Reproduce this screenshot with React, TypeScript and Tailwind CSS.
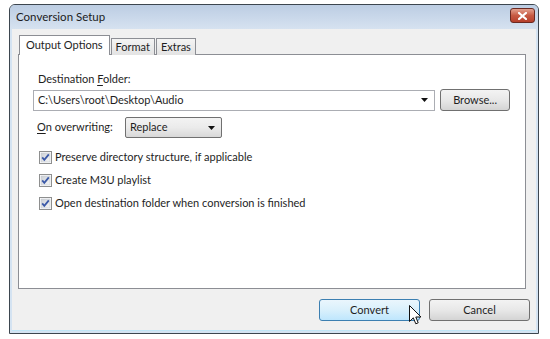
import React from "react";

function CheckBox() {
  return (
    <svg width="13" height="13" viewBox="0 0 13 13" className="shrink-0">
      <defs>
        <linearGradient id="cbg" x1="0" y1="0" x2="1" y2="1">
          <stop offset="0" stopColor="#cbcfd5" />
          <stop offset="1" stopColor="#f6f6f6" />
        </linearGradient>
      </defs>
      <rect x="0.5" y="0.5" width="12" height="12" fill="#fff" stroke="#8e8f8f" />
      <rect x="2" y="2" width="9" height="9" fill="url(#cbg)" stroke="#c2c8d0" strokeWidth="0.6" />
      <path d="M3.2 6.4 L5.3 8.8 L9.8 3.4" fill="none" stroke="#3b59a8" strokeWidth="1.8" />
    </svg>
  );
}

function Option({ label }: { label: string }) {
  return (
    <div className="flex items-center gap-[3px] h-[23px] pl-[6px]">
      <CheckBox />
      <span>{label}</span>
    </div>
  );
}

function Cursor() {
  return (
    <svg
      width="13"
      height="21"
      viewBox="0 0 13 21"
      className="absolute left-[409px] top-[305px]"
    >
      <path
        d="M0.5 0.5 L0.5 16.5 L4.3 12.8 L6.8 18.8 L9.2 17.8 L6.8 12 L12 12 Z"
        fill="#fff"
        stroke="#111"
        strokeWidth="1"
        strokeLinejoin="round"
      />
    </svg>
  );
}

export default function App() {
  return (
    <div
      className="relative w-[550px] h-[339px] bg-white pt-[4px] pl-[9px] text-[11px] text-[#1e1e1e] overflow-hidden"
      style={{ fontFamily: 'Lato, "Open Sans", sans-serif' }}
    >
      <div className="w-[530px] h-[330px] flex flex-col border border-[#3d464f] rounded-t-[6px] bg-[#d4e3f2] overflow-hidden">
        {/* Title bar */}
        <div className="h-[24px] shrink-0 flex items-center justify-between pl-[6px] pr-[3px] bg-gradient-to-b from-[#bccde3] to-[#d6e2f0]">
          <span className="text-[11.5px] text-[#1b1b1b] -mt-[1px]">Conversion Setup</span>
          <div className="w-[25px] h-[15px] mt-[-3px] rounded-[3px] border border-[#6b2a22] bg-gradient-to-b from-[#e3a18f] via-[#c75a43] to-[#b6402c] flex items-center justify-center">
            <svg width="9" height="8" viewBox="0 0 9 8">
              <path d="M1 1 L8 7 M8 1 L1 7" stroke="#fff" strokeWidth="2.2" strokeLinecap="square" />
            </svg>
          </div>
        </div>

        {/* Body */}
        <div className="flex-1 mx-[2px] mb-[2px] bg-[#f0f0f0] border-b border-[#bfe6f7] pt-[6px] px-[6px] flex flex-col">
          {/* Tabs */}
          <div className="flex items-end h-[20px] pl-[1px] relative z-10">
            <div className="h-[20px] px-[6px] bg-white border border-b-0 border-[#8c8e94] flex items-center">
              Output Options
            </div>
            <div className="h-[17px] px-[4px] ml-[1px] bg-gradient-to-b from-[#f4f4f4] to-[#e3e3e3] border border-b-0 border-[#8c8e94] flex items-center">
              Format
            </div>
            <div className="h-[17px] px-[4px] ml-[1px] bg-gradient-to-b from-[#f4f4f4] to-[#e3e3e3] border border-b-0 border-[#8c8e94] flex items-center">
              Extras
            </div>
          </div>

          {/* Panel */}
          <div className="h-[235px] w-[508px] -mt-[1px] bg-white border border-[#8c8e94] pt-[16px] pl-[14px] pr-[15px]">
            <div className="pl-[5px] leading-[16px]">
              Destination <span className="underline underline-offset-2">F</span>older:
            </div>
            <div className="flex items-center mt-[2px]">
              <div className="w-[403px] h-[21px] border border-[#abadb3] bg-white flex items-center justify-between pl-[4px] pr-[6px]">
                <span>C:\Users\root\Desktop\Audio</span>
                <svg width="7" height="4" viewBox="0 0 7 4">
                  <path d="M0 0 L7 0 L3.5 4 Z" fill="#111" />
                </svg>
              </div>
              <div className="ml-[5px] w-[70px] h-[22px] rounded-[3px] border border-[#707070] bg-gradient-to-b from-[#f3f3f3] via-[#e8e8e8] to-[#d4d4d4] flex items-center justify-center">
                Browse...
              </div>
            </div>

            <div className="flex items-center mt-[6px] h-[21px]">
              <span className="pl-[4px] w-[92px]">
                <span className="underline underline-offset-2">O</span>n overwriting:
              </span>
              <div className="w-[97px] h-[21px] rounded-[2px] border border-[#707070] bg-gradient-to-b from-[#f3f3f3] via-[#ebebeb] to-[#d8d8d8] flex items-center justify-between pl-[4px] pr-[6px]">
                <span>Replace</span>
                <svg width="7" height="4" viewBox="0 0 7 4">
                  <path d="M0 0 L7 0 L3.5 4 Z" fill="#111" />
                </svg>
              </div>
            </div>

            <div className="mt-[8px] flex flex-col">
              <Option label="Preserve directory structure, if applicable" />
              <Option label="Create M3U playlist" />
              <Option label="Open destination folder when conversion is finished" />
            </div>
          </div>

          {/* Buttons */}
          <div className="flex justify-end gap-[9px] mt-[10px]">
            <div className="w-[101px] h-[22px] rounded-[3px] border border-[#3c7fb1] bg-gradient-to-b from-[#eaf6fd] via-[#d9f0fc] to-[#bee6fd] flex items-center justify-center">
              Convert
            </div>
            <div className="w-[101px] h-[22px] rounded-[3px] border border-[#707070] bg-gradient-to-b from-[#f3f3f3] via-[#e8e8e8] to-[#d4d4d4] flex items-center justify-center">
              Cancel
            </div>
          </div>
        </div>
      </div>
      <Cursor />
    </div>
  );
}
